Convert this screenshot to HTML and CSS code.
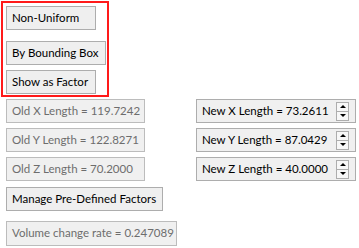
FILE: index.html
```html
<!DOCTYPE html>
<html lang="en">
<head>
    <meta charset="UTF-8">
    <meta name="viewport" content="width=device-width, initial-scale=1.0">
    <title>Scale Options</title>
    <link rel="stylesheet" href="styles.css">
</head>
<body>
    <div class="panel">
        <div class="mode-group">
            <button class="btn btn-non-uniform">Non-Uniform</button>
            <button class="btn btn-bbox">By Bounding Box</button>
            <button class="btn btn-factor">Show as Factor</button>
        </div>

        <div class="length-row first">
            <div class="field old">Old X Length = 119.7242</div>
            <div class="field new">
                <span>New X Length = 73.2611</span>
                <span class="spinner"><span class="up"></span><span class="down"></span></span>
            </div>
        </div>
        <div class="length-row">
            <div class="field old">Old Y Length = 122.8271</div>
            <div class="field new">
                <span>New Y Length = 87.0429</span>
                <span class="spinner"><span class="up"></span><span class="down"></span></span>
            </div>
        </div>
        <div class="length-row">
            <div class="field old">Old Z Length = 70.2000</div>
            <div class="field new">
                <span>New Z Length = 40.0000</span>
                <span class="spinner"><span class="up"></span><span class="down"></span></span>
            </div>
        </div>

        <button class="btn btn-manage">Manage Pre-Defined Factors</button>

        <div class="field old volume">Volume change rate = 0.247089</div>
    </div>
</body>
</html>
```

FILE: styles.css
```css
body {
    margin: 0;
    background-color: #ffffff;
    font-family: Lato, 'Open Sans', sans-serif;
    font-size: 11.5px;
    color: #000;
}
.panel {
    display: flex;
    flex-direction: column;
    align-items: flex-start;
    padding: 1px 0 0 1px;
}
.mode-group {
    display: flex;
    flex-direction: column;
    align-items: flex-start;
    width: 101px;
    border: 2px solid #ff1a1a;
    padding: 3px 0 1px 3px;
}
.btn {
    box-sizing: border-box;
    font-family: inherit;
    font-size: inherit;
    color: #000;
    background-color: #efefef;
    border: 1px solid #adadad;
    height: 24px;
    padding: 0 5px;
    margin: 0;
    text-align: left;
    line-height: 22px;
    white-space: nowrap;
}
.btn-non-uniform {
    width: 90px;
}
.btn-bbox {
    width: 100px;
    margin-top: 11px;
}
.btn-factor {
    width: 90px;
    margin-top: 5px;
}
.length-row {
    display: flex;
    gap: 51px;
    margin-left: 5px;
    margin-top: 5px;
}
.length-row.first {
    margin-top: 2px;
}
.field {
    box-sizing: border-box;
    height: 24px;
    border: 1px solid #bcbcbc;
    background-color: #f0f0f0;
    padding: 0 5px;
    line-height: 22px;
    white-space: nowrap;
}
.field.old {
    width: 139px;
    color: #6d6d6d;
}
.field.new {
    width: 160px;
    display: flex;
    justify-content: space-between;
    align-items: center;
    border-color: #adadad;
    padding-right: 6px;
}
.spinner {
    display: flex;
    flex-direction: column;
    flex-shrink: 0;
    width: 11px;
    height: 17px;
    border: 1px solid #adadad;
    background-color: #f7f7f7;
}
.spinner span {
    flex: 1;
    display: flex;
    align-items: center;
    justify-content: center;
}
.spinner .up {
    border-bottom: 1px solid #adadad;
}
.spinner .up::after {
    content: '';
    border-left: 3px solid transparent;
    border-right: 3px solid transparent;
    border-bottom: 3px solid #000;
}
.spinner .down::after {
    content: '';
    border-left: 3px solid transparent;
    border-right: 3px solid transparent;
    border-top: 3px solid #000;
}
.btn-manage {
    margin-left: 5px;
    margin-top: 6px;
    width: 157px;
}
.field.volume {
    margin-left: 5px;
    margin-top: 10px;
    width: 171px;
    height: 25px;
}
```
